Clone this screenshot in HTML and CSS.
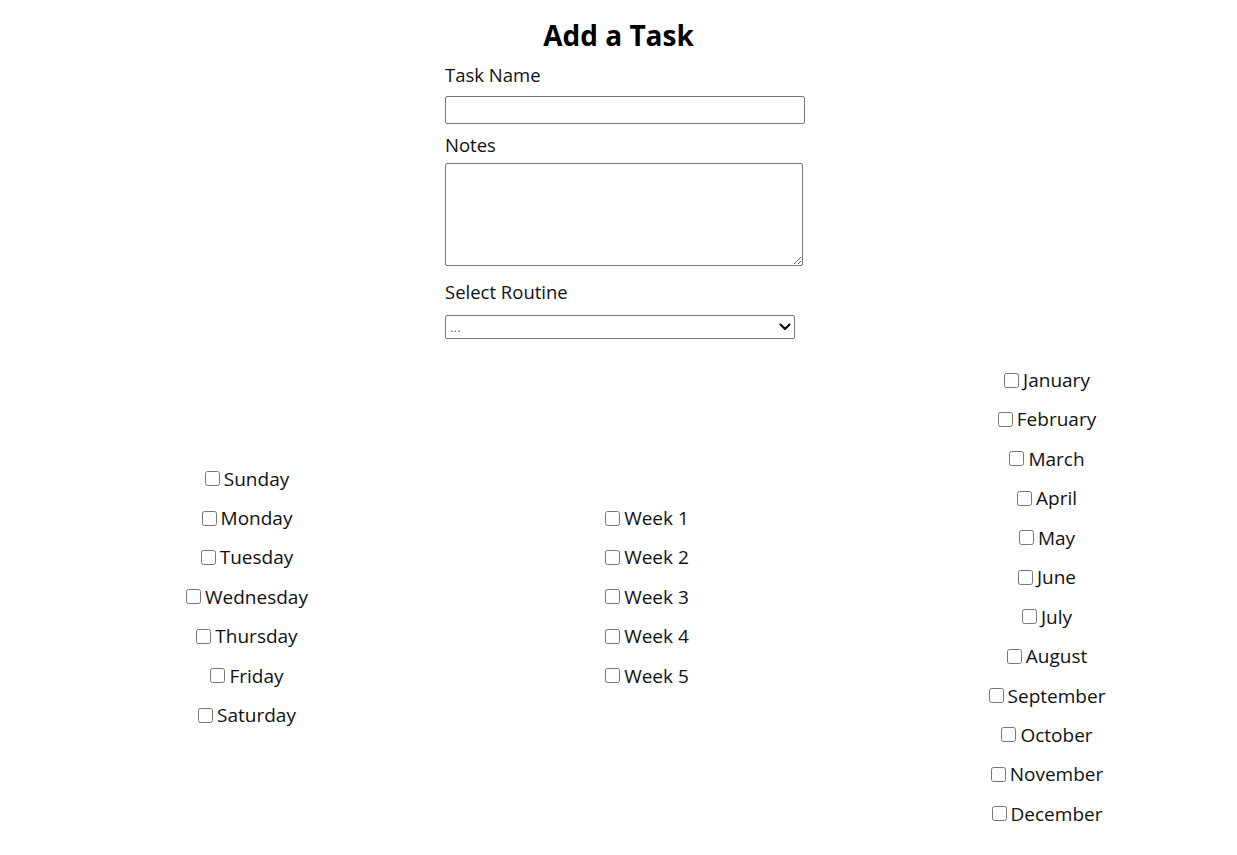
FILE: index.html
```html
<!DOCTYPE html>
<html>
<head>
<meta charset="utf-8">
<link rel="stylesheet" href="styles.css">
</head>
<body>
<h1 class="title">Add a Task</h1>
<form class="task-form">
  <label class="field-label" for="name">Task Name</label>
  <input class="text-input" id="name" type="text">
  <label class="field-label notes-label" for="notes">Notes</label>
  <textarea class="notes-input" id="notes"></textarea>
  <label class="field-label routine-label" for="routine">Select Routine</label>
  <div class="select-wrap">
    <select class="routine-select" id="routine"><option>...</option></select>
    <svg class="chevron" width="12" height="8" viewBox="0 0 12 8" aria-hidden="true"><path d="M1.5 1.5 L6 6 L10.5 1.5" fill="none" stroke="#000" stroke-width="2" stroke-linecap="round" stroke-linejoin="round"/></svg>
  </div>
</form>
<div class="schedule">
  <div class="col">
    <label class="opt"><input type="checkbox">Sunday</label>
    <label class="opt"><input type="checkbox">Monday</label>
    <label class="opt"><input type="checkbox">Tuesday</label>
    <label class="opt"><input type="checkbox">Wednesday</label>
    <label class="opt"><input type="checkbox">Thursday</label>
    <label class="opt"><input type="checkbox">Friday</label>
    <label class="opt"><input type="checkbox">Saturday</label>
  </div>
  <div class="col">
    <label class="opt"><input type="checkbox">Week 1</label>
    <label class="opt"><input type="checkbox">Week 2</label>
    <label class="opt"><input type="checkbox">Week 3</label>
    <label class="opt"><input type="checkbox">Week 4</label>
    <label class="opt"><input type="checkbox">Week 5</label>
  </div>
  <div class="col">
    <label class="opt"><input type="checkbox">January</label>
    <label class="opt"><input type="checkbox">February</label>
    <label class="opt"><input type="checkbox">March</label>
    <label class="opt"><input type="checkbox">April</label>
    <label class="opt"><input type="checkbox">May</label>
    <label class="opt"><input type="checkbox">June</label>
    <label class="opt"><input type="checkbox">July</label>
    <label class="opt"><input type="checkbox">August</label>
    <label class="opt"><input type="checkbox">September</label>
    <label class="opt"><input type="checkbox">October</label>
    <label class="opt"><input type="checkbox">November</label>
    <label class="opt"><input type="checkbox">December</label>
  </div>
</div>
</body>
</html>
```
FILE: styles.css
```css
html, body {
  margin: 0;
  padding: 0;
  background: #fff;
}
body {
  font-family: "Open Sans", "Noto Sans", sans-serif;
  color: #000;
  padding: 8px;
}
.title {
  margin: 9px 0 0;
  text-align: center;
  font-size: 28px;
  line-height: 36px;
  font-weight: 700;
}
.task-form {
  display: flex;
  flex-direction: column;
  align-items: flex-start;
  margin-left: 437px;
  margin-top: 10px;
}
.field-label {
  font-size: 18.5px;
  line-height: 24px;
  color: #111;
}
.text-input {
  margin: 9px 0 0;
  width: 360px;
  height: 28px;
  box-sizing: border-box;
  border: 1px solid #767676;
  border-radius: 2px;
  padding: 1px 2px;
}
.notes-label {
  margin-top: 9px;
}
.notes-input {
  margin: 6px 0 0;
  width: 358px;
  height: 103px;
  box-sizing: border-box;
  border: 1px solid #767676;
  border-radius: 2px;
}
.routine-label {
  margin-top: 14px;
}
.select-wrap {
  position: relative;
  margin-top: 11px;
  width: 350px;
  height: 24px;
}
.routine-select {
  display: block;
  margin: 0;
  width: 350px;
  height: 24px;
  box-sizing: border-box;
  border: 1px solid #767676;
  border-radius: 2px;
  font-size: 13px;
  color: #555;
  background: #fff;
  padding: 0 4px;
  -webkit-appearance: none;
  appearance: none;
}
.chevron {
  position: absolute;
  right: 4px;
  top: 8px;
  pointer-events: none;
}
.schedule {
  display: grid;
  grid-template-columns: 200px 200px 200px;
  column-gap: 200px;
  align-items: center;
  margin-left: 139px;
  margin-top: 29px;
}
.col {
  display: flex;
  flex-direction: column;
  align-items: center;
  gap: 15.45px;
}
.opt {
  display: flex;
  align-items: center;
  font-size: 19px;
  line-height: 24px;
  color: #111;
}
.opt input {
  width: 15px;
  height: 15px;
  margin: 0 4px 0 0;
}
```
